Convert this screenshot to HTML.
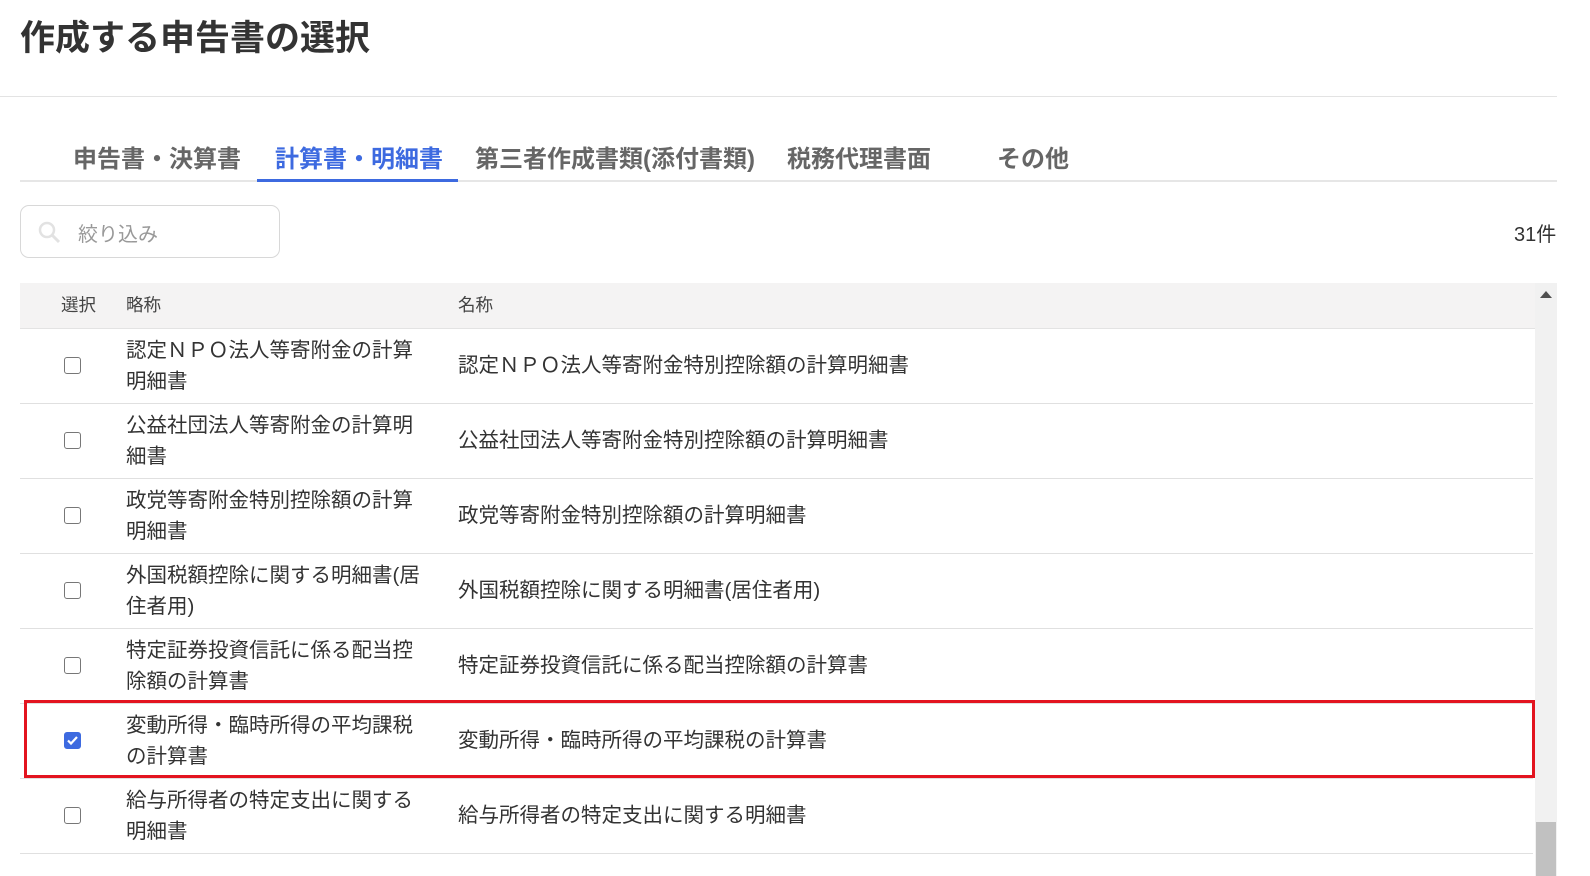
<!DOCTYPE html>
<html><head><meta charset="utf-8"><style>
*{margin:0;padding:0;box-sizing:border-box}
body{width:1590px;height:876px;overflow:hidden;background:#fff;font-family:"Liberation Sans","Noto Sans CJK JP",sans-serif;color:#333;position:relative}
.a{position:absolute}
h1{position:absolute;left:20px;top:10px;font-size:35px;font-weight:bold;color:#333;white-space:nowrap}
.tab{position:absolute;top:139px;font-size:24px;font-weight:bold;color:#666;white-space:nowrap}
.row{position:absolute;left:20px;width:1513px;height:75px;border-bottom:1px solid #e0e0e0;font-size:20.5px;color:#333}
.cb{position:absolute;left:44px;top:28px;width:17px;height:17px;border:1.5px solid #777;border-radius:3px;background:#fff}
.ab{position:absolute;left:106px;top:6px;width:300px;line-height:31px}
.nm{position:absolute;left:438px;top:21px;line-height:31px;white-space:nowrap}
</style></head><body>
<h1>作成する申告書の選択</h1>
<div class="a" style="left:0;top:96px;width:1557px;height:1px;background:#e3e3e3"></div>
<div class="tab" style="left:73px">申告書・決算書</div>
<div class="tab" style="left:275px;color:#3d6ae0">計算書・明細書</div>
<div class="tab" style="left:475px">第三者作成書類(添付書類)</div>
<div class="tab" style="left:787px">税務代理書面</div>
<div class="tab" style="left:997px">その他</div>
<div class="a" style="left:20px;top:180px;width:1537px;height:2px;background:#e6e6e6"></div>
<div class="a" style="left:257px;top:179px;width:201px;height:3px;background:#3d6ae0"></div>
<div class="a" style="left:20px;top:205px;width:260px;height:53px;border:1px solid #d8d8d8;border-radius:9px"></div>
<svg class="a" style="left:37px;top:220px" width="26" height="26" viewBox="0 0 26 26"><circle cx="10" cy="10" r="7" fill="none" stroke="#e2e2e2" stroke-width="2.5"/><line x1="15" y1="15" x2="22" y2="22" stroke="#e2e2e2" stroke-width="3"/></svg>
<div class="a" style="left:78px;top:218px;font-size:20px;color:#999">絞り込み</div>
<div class="a" style="left:1514px;top:218px;font-size:20px;color:#333">31件</div>
<div class="a" style="left:20px;top:283px;width:1515px;height:46px;background:#f4f3f3;border-bottom:1px solid #e3e3e3"></div>
<div class="a" style="left:61px;top:292px;font-size:17.5px;color:#444">選択</div>
<div class="a" style="left:126px;top:292px;font-size:17.5px;color:#444">略称</div>
<div class="a" style="left:458px;top:292px;font-size:17.5px;color:#444">名称</div>
<div class="a" style="left:1535px;top:283px;width:22px;height:593px;background:#f1f1f1"></div>
<div class="a" style="left:1540px;top:291px;width:0;height:0;border-left:6px solid transparent;border-right:6px solid transparent;border-bottom:7px solid #505050"></div>
<div class="a" style="left:1536px;top:822px;width:20px;height:54px;background:#c1c1c1"></div>

<div class="row" style="top:329px"><div class="cb"></div><div class="ab">認定ＮＰＯ法人等寄附金の計算明細書</div><div class="nm">認定ＮＰＯ法人等寄附金特別控除額の計算明細書</div></div>
<div class="row" style="top:404px"><div class="cb"></div><div class="ab">公益社団法人等寄附金の計算明細書</div><div class="nm">公益社団法人等寄附金特別控除額の計算明細書</div></div>
<div class="row" style="top:479px"><div class="cb"></div><div class="ab">政党等寄附金特別控除額の計算明細書</div><div class="nm">政党等寄附金特別控除額の計算明細書</div></div>
<div class="row" style="top:554px"><div class="cb"></div><div class="ab">外国税額控除に関する明細書(居住者用)</div><div class="nm">外国税額控除に関する明細書(居住者用)</div></div>
<div class="row" style="top:629px"><div class="cb"></div><div class="ab">特定証券投資信託に係る配当控除額の計算書</div><div class="nm">特定証券投資信託に係る配当控除額の計算書</div></div>
<div class="row" style="top:704px"><div class="cb" style="background:#3d6ae0;border-color:#3d6ae0"><svg width="15" height="15" viewBox="0 0 15 15" style="position:absolute;left:0;top:0"><path d="M3 7.5l3 3 6-6.5" fill="none" stroke="#fff" stroke-width="2.2"/></svg></div><div class="ab">変動所得・臨時所得の平均課税の計算書</div><div class="nm">変動所得・臨時所得の平均課税の計算書</div></div>
<div class="row" style="top:779px"><div class="cb"></div><div class="ab">給与所得者の特定支出に関する明細書</div><div class="nm">給与所得者の特定支出に関する明細書</div></div>
<div class="a" style="left:24px;top:700px;width:1511px;height:78px;border:3px solid #e3141f"></div>
</body></html>
